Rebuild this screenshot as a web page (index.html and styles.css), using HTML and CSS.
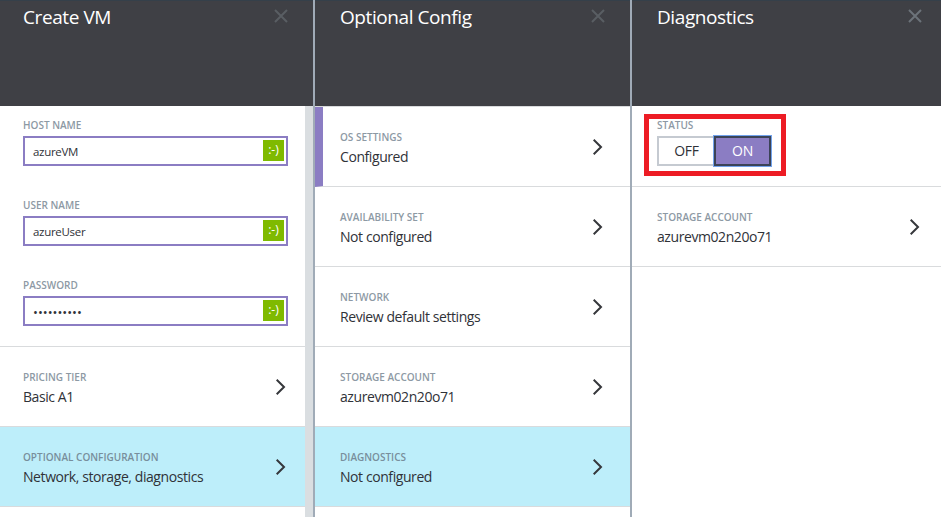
FILE: index.html
```html
<!DOCTYPE html>
<html lang="en">
<head>
<meta charset="utf-8">
<title>Create VM</title>
<link rel="stylesheet" href="styles.css">
</head>
<body>
<svg class="defs" width="0" height="0">
  <symbol id="close" viewBox="0 0 14 14"><path d="M1 1L13 13M13 1L1 13" fill="none" stroke="currentColor" stroke-width="2"/></symbol>
  <symbol id="chevron" viewBox="0 0 10 16"><path d="M.7 .8L8 8L.7 15.2" fill="none" stroke="currentColor" stroke-width="2"/></symbol>
</svg>
<main class="blades">
  <section class="blade create">
    <header class="head"><h1>Create VM</h1><svg class="close"><use href="#close"/></svg></header>
    <div class="content">
      <div class="form">
        <div class="field"><label class="label">HOST NAME</label><div class="input"><span>azureVM</span><b class="valid">:-)</b></div></div>
        <div class="field"><label class="label">USER NAME</label><div class="input"><span>azureUser</span><b class="valid">:-)</b></div></div>
        <div class="field"><label class="label">PASSWORD</label><div class="input"><span class="dots">••••••••••</span><b class="valid">:-)</b></div></div>
      </div>
      <div class="row"><div><div class="label">PRICING TIER</div><div class="value">Basic A1</div></div><svg class="chevron"><use href="#chevron"/></svg></div>
      <div class="row selected"><div><div class="label">OPTIONAL CONFIGURATION</div><div class="value">Network, storage, diagnostics</div></div><svg class="chevron"><use href="#chevron"/></svg></div>
    </div>
  </section>
  <section class="blade config">
    <header class="head"><h1>Optional Config</h1><svg class="close"><use href="#close"/></svg></header>
    <div class="content">
      <div class="row marked"><div><div class="label">OS SETTINGS</div><div class="value">Configured</div></div><svg class="chevron"><use href="#chevron"/></svg></div>
      <div class="row"><div><div class="label">AVAILABILITY SET</div><div class="value">Not configured</div></div><svg class="chevron"><use href="#chevron"/></svg></div>
      <div class="row"><div><div class="label">NETWORK</div><div class="value">Review default settings</div></div><svg class="chevron"><use href="#chevron"/></svg></div>
      <div class="row"><div><div class="label">STORAGE ACCOUNT</div><div class="value">azurevm02n20o71</div></div><svg class="chevron"><use href="#chevron"/></svg></div>
      <div class="row selected"><div><div class="label">DIAGNOSTICS</div><div class="value">Not configured</div></div><svg class="chevron"><use href="#chevron"/></svg></div>
    </div>
  </section>
  <section class="blade diag">
    <header class="head"><h1>Diagnostics</h1><svg class="close bright"><use href="#close"/></svg></header>
    <div class="content">
      <div class="status">
        <div class="highlight">
          <div class="label">STATUS</div>
          <div class="toggle"><span class="off">OFF</span><span class="on">ON</span></div>
        </div>
      </div>
      <div class="row"><div><div class="label">STORAGE ACCOUNT</div><div class="value">azurevm02n20o71</div></div><svg class="chevron"><use href="#chevron"/></svg></div>
    </div>
  </section>
</main>
</body>
</html>
```
FILE: styles.css
```css
* { box-sizing: border-box; }
body { margin: 0; background: #fff; font-family: "Open Sans", "Noto Sans", sans-serif; color: #303238; overflow: hidden; }
.defs { display: block; }
.blades { display: grid; grid-template-columns: 315px 317px 309px; height: 517px; }
.blade { display: flex; flex-direction: column; min-width: 0; }
.create, .config { border-right: 2px solid #a0abb7; }
.head { height: 106px; flex: none; background: #3f4045; border-top: 1px solid #35404a; display: flex; justify-content: space-between; align-items: flex-start; padding: 2px 19px 0 25px; }
.create .head { padding: 2px 25px 0 23px; }
.config .head { padding-right: 25px; }
h1 { margin: 0; font-size: 19px; line-height: 28px; font-weight: 400; letter-spacing: -.42px; color: #fff; white-space: nowrap; }
.close { width: 14px; height: 14px; margin-top: 6px; color: #595e63; }
.close.bright { color: #6c737a; }
.content { flex: 1; }
.create .content { border-right: 8px solid #dadee1; }
.config .content { border-top: 1px solid #d9dbdd; }
.form { height: 241px; border-bottom: 1px solid #d9dbdd; padding: 11px 17px 0 23px; }
.field { height: 80px; }
.label { display: block; font-size: 10px; line-height: 16px; font-weight: 600; color: #8d99a4; white-space: nowrap; }
.input { height: 30px; margin-top: 3px; border: 2px solid #8b7dc3; padding: 0 2px 0 8px; display: flex; align-items: center; justify-content: space-between; font-size: 11.5px; letter-spacing: -.3px; }
.input span { padding-top: 1px; }
.input .dots { font-size: 13px; letter-spacing: 0; }
.valid { width: 21px; height: 21px; margin-top: -1px; background: #7fba00; color: #fff; font-size: 12px; font-weight: 400; letter-spacing: 0; line-height: 19px; text-align: center; }
.row { height: 80px; border-bottom: 1px solid #d9dbdd; display: flex; justify-content: space-between; padding: 22px 17px 0 25px; }
.create .row { padding-left: 23px; padding-right: 19px; }
.config .row { padding-right: 27px; }
.diag .row { padding-right: 21px; }
.config .row.marked { border-left: 8px solid #8b7dc3; padding-left: 17px; }
.selected { background: #bdeefa; }
.selected .label { color: #788e9c; }
.value { font-size: 14px; line-height: 20px; letter-spacing: -.42px; margin-top: 2px; white-space: nowrap; }
.chevron { width: 10px; height: 16px; margin-top: 10px; color: #35373b; }
.status { height: 81px; border-bottom: 1px solid #d9dbdd; padding: 8px 0 0 12px; }
.highlight { width: 142px; height: 62px; border: 5px solid #ed1c24; padding: 0 8px; }
.highlight .label { margin-top: -2px; }
.toggle { display: flex; width: 114px; height: 30px; margin-top: 3px; font-size: 14px; letter-spacing: -.2px; line-height: 26px; text-align: center; }
.off { width: 57px; border: 2px solid #c5cad1; border-right: 0; }
.on { width: 57px; background: #8b7dc3; color: #fff; border: 2px solid #3b4357; outline: 1px solid #72a3ec; }
```
